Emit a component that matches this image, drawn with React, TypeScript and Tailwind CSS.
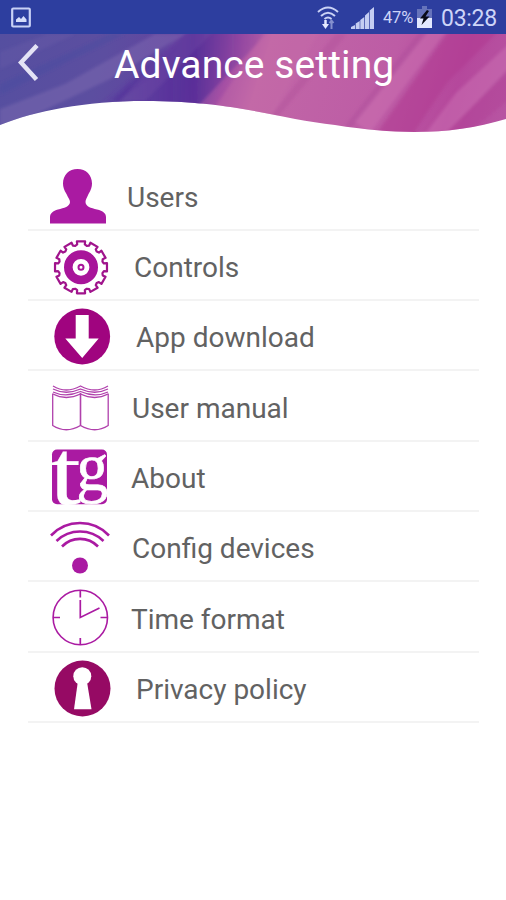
import type { ReactNode } from "react"

const PURPLE = "#aa1aa2"

// outline of a cog with 12 teeth
function cogPath(cx: number, cy: number) {
  const steps: [number, number][] = [
    [-9, 26.3],
    [9, 26.3],
    [9.5, 23.2],
    [15, 22.2],
    [20.5, 23.2],
  ]
  const points: string[] = []
  for (let tooth = 0; tooth < 12; tooth++) {
    for (const [offset, radius] of steps) {
      const angle = ((tooth * 30 + offset - 90) * Math.PI) / 180
      points.push(`${(cx + radius * Math.cos(angle)).toFixed(2)} ${(cy + radius * Math.sin(angle)).toFixed(2)}`)
    }
  }
  return `M${points.join("L")}Z`
}

function Icon({ children }: { children: ReactNode }) {
  return (
    <svg viewBox="0 0 68 70" className="mt-[2px] h-[70px] w-[68px] shrink-0 overflow-visible" fill="none">
      {children}
    </svg>
  )
}

const items = [
  {
    label: "Users",
    offset: "pl-[13px]",
    icon: (
      <path
        d="M4 62.500V56.500C4 52 7 50 12 48.500C18 47 24 45.500 24 41C24 38.500 22 36.500 20.500 33C18 29 17 26 17 22.500C17 14 23 8 31.500 8C40 8 46 14 46 22.500C46 26 45 29 42.500 33C41 36.500 39.500 38.500 39.500 41C39.500 45.500 45 47 51 48.500C57 50 60 52 60 56.500V62.500Z"
        fill={PURPLE}
      />
    ),
  },
  {
    label: "Controls",
    offset: "pl-5",
    icon: (
      <>
        <path d={cogPath(35, 36.3)} stroke="#a0148c" strokeWidth="2.200" strokeLinejoin="round" />
        <circle cx="35" cy="36.300" r="12.700" stroke="#a8149a" strokeWidth="8.600" />
        <circle cx="35" cy="36.300" r="2.500" stroke="#a8149a" strokeWidth="2" />
      </>
    ),
  },
  {
    label: "App download",
    offset: "pl-[22px]",
    icon: (
      <>
        <circle cx="36.200" cy="35.500" r="27.900" fill="#a0047f" />
        <path d="M29.700 14H42.700V37.500H52.700L36.200 57L19.300 37.500H29.700Z" fill="#fff" />
      </>
    ),
  },
  {
    label: "User manual",
    offset: "pl-[18px]",
    icon: (
      <g stroke="#b040ac" strokeWidth="1.300">
        <path d="M6.700 21.500V53.500Q20 62 34.500 53.500Q49 62 62.200 53.500V21.500" />
        <path d="M34.500 21V54" strokeWidth="1.600" />
        <path d="M7 14Q20 22 34.500 14Q49 22 62 14M7 17Q20 23.500 34.500 17Q49 23.500 62 17M7 20Q20 26 34.500 19.500Q49 26 62 20M7 22Q20 29 34.500 22Q49 29 62 22" />
      </g>
    ),
  },
  {
    label: "About",
    offset: "pl-[17px]",
    icon: (
      <>
        <rect x="6" y="7.500" width="55" height="54.700" rx="5" fill={PURPLE} />
        <g fill="#fff" stroke="#fff" fontFamily="Liberation Serif, serif">
          <text fontSize="94" strokeWidth="0.200" transform="translate(3.500 62) scale(1.200 1)">t</text>
          <text fontSize="67" strokeWidth="0.700" transform="translate(30.500 47.500) scale(0.950 1)">g</text>
        </g>
      </>
    ),
  },
  {
    label: "Config devices",
    offset: "pl-[18px]",
    icon: (
      <>
        <path
          d="M5 23.500A40 40 0 0 1 63 23.500M10.500 29A34 34 0 0 1 57.500 29M16 34.500A25 25 0 0 1 52 34.500"
          stroke={PURPLE}
          strokeWidth="2.600"
        />
        <circle cx="34" cy="53.500" r="8" fill={PURPLE} />
      </>
    ),
  },
  {
    label: "Time format",
    offset: "pl-[17px]",
    icon: (
      <>
        <circle cx="34.300" cy="35.500" r="27.200" stroke={PURPLE} strokeWidth="1.600" />
        <path d="M34.300 8V15.500M34.300 56V63M7 35.500H14M54.500 35.500H61.500M34.300 18V35.500L53.500 26" stroke={PURPLE} strokeWidth="1.700" />
      </>
    ),
  },
  {
    label: "Privacy policy",
    offset: "pl-[22px]",
    icon: (
      <>
        <circle cx="36.500" cy="35.500" r="28" fill="#960a64" />
        <circle cx="36.300" cy="23.200" r="9" fill="#fff" />
        <path d="M31.800 29H41L45.500 56.300H28Z" fill="#fff" />
      </>
    ),
  },
]

function StatusBar() {
  return (
    <div className="flex h-[34px] items-center bg-[#2d3e9f] pl-[11px] pr-[9px] text-[#cdd5f8]">
      <svg viewBox="0 0 20 21" className="h-[21px] w-5" fill="none">
        <rect x="1.200" y="1.500" width="17.600" height="18" rx="1" stroke="#c9d1f6" strokeWidth="2.200" />
        <path d="M5 15V12.500L8 10L10 12L12.500 9L15.500 12.500V15Z" fill="#d5dcfa" />
      </svg>
      <svg viewBox="0 0 24 26" className="ml-auto h-[26px] w-6" fill="none">
        <path d="M2 8Q12 -1 22 8M5 12Q12 5.500 19 12M8.500 15Q12 12 15.500 15" stroke="#cbd3f6" strokeWidth="2" />
        <path d="M9.500 16V21" stroke="#e5eaff" strokeWidth="2.500" />
        <path d="M6 20H13L9.500 25Z" fill="#e5eaff" />
        <path d="M15.500 25V17M13.500 19L15.500 16.500L17.500 19" stroke="#8490ce" strokeWidth="2" />
      </svg>
      <svg viewBox="0 0 24 23" className="ml-[11px] h-[23px] w-6" fill="#c4cdf2">
        <path d="M0 23V21L4 19V23ZM4.700 23V17.500L8.700 15V23ZM9.300 23V14L13.300 11V23ZM14 23V9.500L18 6V23ZM18.700 23V4.500L23 1V23Z" />
      </svg>
      <span className="ml-2 mt-[2px] w-[31px] whitespace-nowrap text-[16.500px] tracking-[-0.200px]">47%</span>
      <svg viewBox="0 0 15 22" className="ml-[3px] h-[22px] w-[15px]">
        <path d="M5 0H10V3H15V12H0V3H5Z" fill="#6673bb" />
        <path d="M0 12H15V22H0Z" fill="#e2e8ff" />
        <path d="M10 4L3 12.500H6.500L4.500 19L12.500 10.500H8.500L12 5Z" fill="#090b18" />
      </svg>
      <span className="ml-[9px] mt-[2px] w-[56px] whitespace-nowrap text-[23px] leading-none tracking-[-0.300px]">03:28</span>
    </div>
  )
}

function Header() {
  return (
    <header className="relative h-[99px]">
      <svg viewBox="0 0 506 99" className="absolute inset-0 h-[99px] w-[506px]">
        <defs>
          <linearGradient id="base" gradientUnits="userSpaceOnUse" x1="0" y1="0" x2="506" y2="160">
            <stop offset="0" stopColor="#554fa0" />
            <stop offset="0.200" stopColor="#5c4ea0" />
            <stop offset="0.360" stopColor="#64409f" />
            <stop offset="0.430" stopColor="#a44fa4" />
            <stop offset="0.490" stopColor="#c167a7" />
            <stop offset="0.720" stopColor="#bd5ca5" />
            <stop offset="0.850" stopColor="#b5489c" />
            <stop offset="1" stopColor="#b85aa5" />
          </linearGradient>
          <linearGradient id="violet" x1="0" y1="0" x2="1" y2="0">
            <stop offset="0" stopColor="#5631a0" stopOpacity="0.100" />
            <stop offset="0.550" stopColor="#552b97" stopOpacity="0.850" />
            <stop offset="1" stopColor="#984ba2" stopOpacity="0.300" />
          </linearGradient>
          <filter id="soft" x="-5%" y="-5%" width="110%" height="110%">
            <feGaussianBlur stdDeviation="1.8" />
          </filter>
          <clipPath id="wave">
            <path d="M0 0H506V85C455 100 405 102 335 91C280 85 235 67 145 67C85 67 35 77 0 91Z" />
          </clipPath>
        </defs>
        <g clipPath="url(#wave)">
          <rect width="506" height="99" fill="url(#base)" />
          <g filter="url(#soft)">
            <path d="M0 75L65 50L155 0H185L110 45L30 83L0 92Z" fill="#8b75b8" opacity="0.350" />
            <path d="M0 18L48 0H75L0 35Z" fill="#7869ae" opacity="0.200" />
            <path d="M0 50L110 0H125L0 61Z" fill="#4547a0" opacity="0.350" />
            <path d="M100 70L190 -4H270L195 75Z" fill="url(#violet)" />
            <path d="M112 65L180 10L168 27L118 69Z" fill="#4f2e99" opacity="0.450" />
            <path d="M183 -4H215L145 67H120Z" fill="#7654a8" opacity="0.300" />
            <path d="M214 75L266 -4H320L264 94Z" fill="#c56ca8" opacity="0.400" />
            <path d="M335 0L270 83L278 83L347 0Z" fill="#a94696" opacity="0.300" />
            <path d="M354 87L427 -4H447L370 99Z" fill="#cf74b4" opacity="0.450" />
            <path d="M345 92L421 -4H430L352 93Z" fill="#a94898" opacity="0.400" />
            <path d="M450 -4H500L448 48L411 103H374Z" fill="#b0388f" opacity="0.450" />
            <path d="M510 9V33L448 98L426 99L456 59Z" fill="#cb70b3" opacity="0.500" />
            <path d="M510 36V65L468 99H445Z" fill="#ae3c93" opacity="0.350" />
          </g>
        </g>
      </svg>
      <div className="relative flex items-start pl-[18px]">
        <svg viewBox="0 0 22 38" className="mt-[10px] h-[38px] w-[22px]" fill="none">
          <path d="M19 1.500L3 18.500L18.500 35.500" stroke="#e4e3f5" strokeWidth="4.500" />
        </svg>
        <h1 className="ml-[74px] mt-2 whitespace-nowrap text-[39px] leading-[46px] tracking-[0.100px] text-white">
          Advance setting
        </h1>
      </div>
    </header>
  )
}

export default function App() {
  return (
    <div className="h-[900px] w-[506px] overflow-hidden bg-white font-[Roboto,sans-serif]">
      <StatusBar />
      <Header />
      <ul className="ml-7 mt-[27.500px] w-[451px]">
        {items.map((item) => (
          <li key={item.label} className="flex h-[70.300px] items-center border-b-2 border-[#f3f3f3] pl-[18px]">
            <Icon>{item.icon}</Icon>
            <span className={`${item.offset} whitespace-nowrap pt-[6.500px] text-[28px] leading-8 text-[#626262]`}>
              {item.label}
            </span>
          </li>
        ))}
      </ul>
    </div>
  )
}
